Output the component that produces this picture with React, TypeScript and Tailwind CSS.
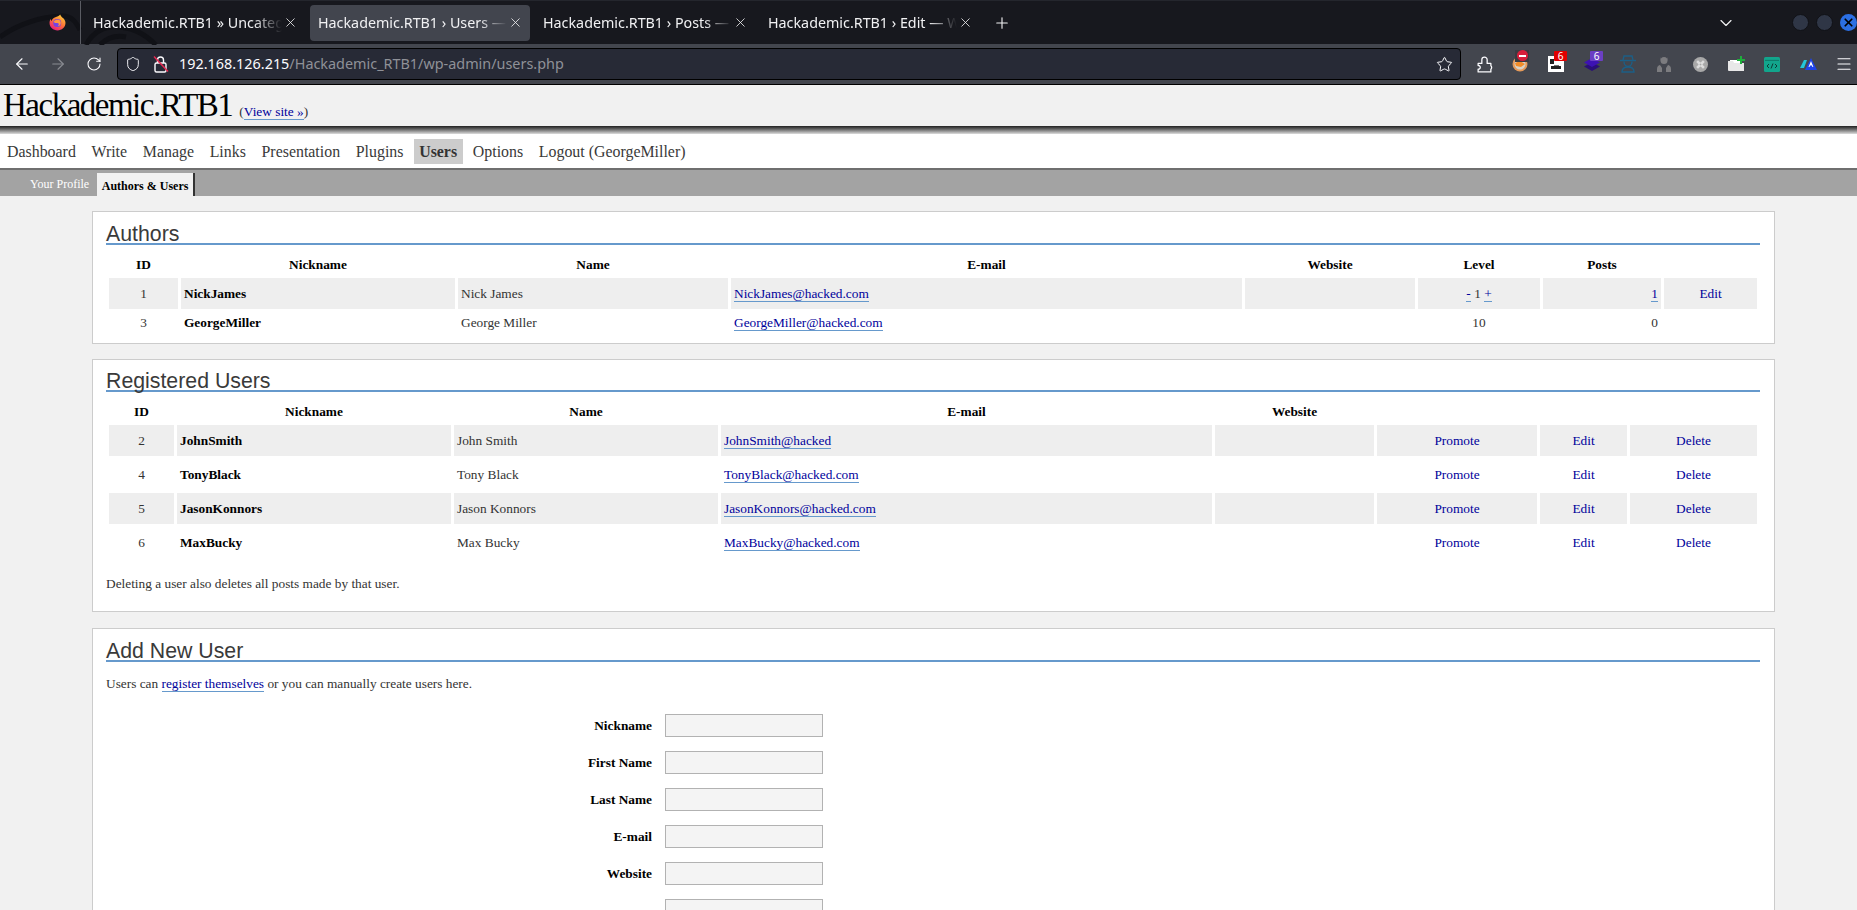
import React from "react";
import { ArrowLeft, ArrowRight, ChevronDown, Menu, Plus, RotateCw, Shield, Star, X } from "lucide-react";

const tabs = [
  { title: "Hackademic.RTB1 » Uncategorized", active: false },
  { title: "Hackademic.RTB1 › Users — WordPress", active: true },
  { title: "Hackademic.RTB1 › Posts — WordPress", active: false },
  { title: "Hackademic.RTB1 › Edit — WordPress", active: false },
];

const navItems = ["Dashboard", "Write", "Manage", "Links", "Presentation", "Plugins", "Users", "Options", "Logout (GeorgeMiller)"];

const registered = [
  { id: 2, nick: "JohnSmith", name: "John Smith", email: "JohnSmith@hacked" },
  { id: 4, nick: "TonyBlack", name: "Tony Black", email: "TonyBlack@hacked.com" },
  { id: 5, nick: "JasonKonnors", name: "Jason Konnors", email: "JasonKonnors@hacked.com" },
  { id: 6, nick: "MaxBucky", name: "Max Bucky", email: "MaxBucky@hacked.com" },
];

const FirefoxLogo = () => (
  <svg width="17" height="17" viewBox="0 0 32 32">
    <defs>
      <linearGradient id="ffa" x1="0.8" y1="0" x2="0.2" y2="1">
        <stop offset="0" stopColor="#ffd23a" />
        <stop offset="0.5" stopColor="#ff7139" />
        <stop offset="1" stopColor="#e31587" />
      </linearGradient>
    </defs>
    <path d="M21 1c1 3 3 5 6 7 3 3 4 6 4 9 0 8-7 14-15 14S1 25 1 17c0-3 1-6 2-8 0 2 1 3 2 4 1-4 4-6 7-7 3-1 7-2 9-5z" fill="url(#ffa)" />
    <circle cx="15.5" cy="17" r="7.5" fill="#7542e5" />
    <path d="M9 14c2-3 6-4 9-3 3 1 5 4 4 8-1 3-4 4-6 4 2-1 3-3 2-5-1-1-3-1-5-1-2 0-3-1-4-3z" fill="#ff9640" />
  </svg>
);

const Wallpaper = () => (
  <svg className="absolute left-0 top-0" width="220" height="44" viewBox="0 0 220 44" fill="none" stroke="#101116" strokeWidth="5">
    <path d="M0 36C20 22 40 16 62 15c10 0 14 6 18 14" />
    <path d="M86 44c6-12 18-20 34-18 16 2 26 8 36 18" />
    <path d="M100 44c8-8 16-10 26-8" />
  </svg>
);

const ExtensionsIcon = () => (
  <svg width="17" height="17" viewBox="0 0 16 16" fill="none" stroke="#fbfbfe" strokeWidth="1.2" strokeLinejoin="round">
    <path d="M2 7h3.5V3.5a2.5 2.5 0 0 1 5 0V7H14v2.2a2.1 2.1 0 0 1 0 3.2V15H2v-2.6h1a1.9 1.9 0 0 0 0-3.4H2z" />
  </svg>
);

const StrikeLock = () => (
  <svg width="16" height="18" viewBox="0 0 16 18" fill="none" stroke="#fbfbfe" strokeWidth="1.4">
    <rect x="2" y="8" width="11" height="9" rx="1.5" />
    <path d="M4.5 8V5a3 3 0 0 1 6 0v3" />
    <path d="M1 1.5L15 16.5" stroke="#e22850" strokeWidth="1.6" />
  </svg>
);

const FoxIcon = () => (
  <svg width="16" height="16" viewBox="0 0 16 16">
    <circle cx="8" cy="8" r="7.5" fill="#e59a5a" />
    <circle cx="8" cy="8" r="5.5" fill="#d9d3c8" />
    <path d="M3 7l5-2 5 3-4 3-5-1z" fill="#f28c28" />
  </svg>
);

const QrIcon = () => (
  <svg width="16" height="16" viewBox="0 0 16 16">
    <rect width="16" height="16" fill="#ffffff" />
    <path d="M2 3h4v5H2zM3 10h10v3H3z" fill="#222222" />
    <path d="M6 9h5v1H6z" fill="#777777" />
  </svg>
);

const StackIcon = () => (
  <svg width="16" height="16" viewBox="0 0 16 16">
    <path d="M8 6l8 4.5L8 15 0 10.5z" fill="#2a0f78" />
    <path d="M8 2l8 4.5L8 11 0 6.5z" fill="#3d12b3" />
  </svg>
);

const SpyIcon = () => (
  <svg width="16" height="18" viewBox="0 0 16 18" fill="none" stroke="#1c5f86" strokeWidth="1.4">
    <path d="M0 5.5h16" />
    <path d="M3 5l1-4h8l1 4" />
    <path d="M4 6.5c0 3 2 5 4 5s4-2 4-5" />
    <path d="M2 17c0-3 2-5 6-5s6 2 6 5z" />
  </svg>
);

const GhostsIcon = () => (
  <svg width="14" height="16" viewBox="0 0 14 16" fill="#7c7c7f">
    <circle cx="7" cy="4.5" r="3.5" />
    <path d="M3 1l1 2h6l1-2-1 4H4z" />
    <path d="M0 16v-3c0-3 2-4 3-4l2 3v4zM14 16v-3c0-3-2-4-3-4l-2 3v4z" />
  </svg>
);

const CommandIcon = () => (
  <svg width="15" height="15" viewBox="0 0 15 15">
    <circle cx="7.5" cy="7.5" r="7.5" fill="#a8a8a8" />
    <path d="M6 6h3v3H6zM6 6H5a1 1 0 1 1 1-1zM9 6V5a1 1 0 1 1 1 1zM9 9h1a1 1 0 1 1-1 1zM6 9v1a1 1 0 1 1-1-1z" fill="none" stroke="#ededed" strokeWidth="1" />
  </svg>
);

const FolderPlus = () => (
  <svg width="17" height="16" viewBox="0 0 17 16">
    <path d="M2 4h11v11H2z" fill="#ffffff" />
    <path d="M0 5h5l1 2h10v8H1a1 1 0 0 1-1-1z" fill="#e8e8e8" />
    <path d="M9 3h3V0h2v3h3v2h-3v3h-2V5H9z" fill="#1fae3d" />
  </svg>
);

const DevIcon = () => (
  <svg width="16" height="15" viewBox="0 0 16 15">
    <rect width="16" height="15" rx="1.5" fill="#12a58c" />
    <path d="M1 3.4h14" stroke="#0b6f60" strokeWidth="0.8" />
    <path d="M5 7L3 9l2 2M11 7l2 2-2 2M9 6.5l-2 5" fill="none" stroke="#0d3b35" strokeWidth="1" />
  </svg>
);

const AiIcon = () => (
  <svg width="17" height="12" viewBox="0 0 17 12">
    <path d="M11 0l6 12H5z" fill="#1f43e8" />
    <path d="M4 2h3L4 10H0z" fill="#23c7d9" />
    <path d="M11 3l2.4 6h-1l-.5-1.4H10l-.5 1.4h-1z" fill="#ffffff" />
  </svg>
);

const Badge = ({ color }: { color: string }) => (
  <span className={`absolute left-[16px] top-[7px] flex h-[10px] w-[13px] items-center justify-center rounded-[1px] text-[10px] leading-none text-white ${color}`}>
    6
  </span>
);

const ExtButton = ({ children }: { children: React.ReactNode }) => (
  <div className="relative flex h-full w-9 shrink-0 items-center justify-center">{children}</div>
);

const BrowserChrome = () => (
  <div className="font-['Noto_Sans',sans-serif]">
    <div className="relative flex h-[44px] items-center border-t border-[#24262d] bg-[#17181e] text-[#f1f1f3]">
      <Wallpaper />
      <div className="relative flex h-full w-[80px] shrink-0 items-center justify-end pr-[14px]">
        <FirefoxLogo />
      </div>
      <div className="relative flex h-full w-[5px] shrink-0 border-l border-[#5a5c63]" />
      {tabs.map((tab) => (
        <div
          key={tab.title}
          className={`relative mr-[5px] flex h-[36px] w-[220px] shrink-0 items-center rounded pl-2 ${tab.active ? "bg-[#42454e]" : ""}`}
        >
          <span className="w-[189px] shrink-0 overflow-hidden whitespace-nowrap text-[14.3px] [mask-image:linear-gradient(to_right,black_85%,transparent)]">
            {tab.title}
          </span>
          <X size={15} strokeWidth={1.3} className="ml-[1px] shrink-0" />
        </div>
      ))}
      <Plus size={18} strokeWidth={1.5} className="ml-[8px] shrink-0" />
      <ChevronDown size={20} strokeWidth={1.4} className="ml-[705px] shrink-0" />
      <div className="ml-[56px] h-[17px] w-[17px] shrink-0 rounded-full border border-[#101116] bg-[#2f3646]" />
      <div className="ml-[7px] h-[17px] w-[17px] shrink-0 rounded-full border border-[#101116] bg-[#2f3646]" />
      <div className="ml-[7px] flex h-[17px] w-[17px] shrink-0 items-center justify-center rounded-full bg-[#2b6fe3] text-black">
        <X size={13} strokeWidth={3.2} />
      </div>
    </div>
    <div className="flex h-[41px] items-center border-b border-black bg-[#43464e] pl-[4px] text-[#fbfbfe]">
      <div className="flex w-9 shrink-0 justify-center">
        <ArrowLeft size={18} strokeWidth={1.5} />
      </div>
      <div className="flex w-9 shrink-0 justify-center text-[#8a8c92]">
        <ArrowRight size={18} strokeWidth={1.5} />
      </div>
      <div className="flex w-9 shrink-0 justify-center">
        <RotateCw size={16} strokeWidth={1.6} />
      </div>
      <div className="ml-[5px] flex h-[32px] w-[1344px] shrink-0 items-center rounded border border-black bg-[#272a36] pl-[7px]">
        <Shield size={16} strokeWidth={1.4} />
        <div className="ml-[12px] flex">
          <StrikeLock />
        </div>
        <span className="ml-[10px] whitespace-nowrap text-[14.4px]">
          192.168.126.215<span className="text-[#8f9198]">/Hackademic_RTB1/wp-admin/users.php</span>
        </span>
        <Star size={17} strokeWidth={1.4} className="ml-auto mr-[7px]" />
      </div>
      <div className="ml-[5px] flex h-full shrink-0">
        <ExtButton>
          <ExtensionsIcon />
        </ExtButton>
        <ExtButton>
          <FoxIcon />
          <span className="absolute left-[13px] top-[6px] h-[12px] w-[14px] bg-[#3a3c42]" />
          <span className="absolute left-[15px] top-[6px] flex h-[11px] w-[11px] items-center justify-center rounded-full bg-[#d81e3a]">
            <span className="h-[2px] w-[7px] bg-white" />
          </span>
        </ExtButton>
        <ExtButton>
          <QrIcon />
          <Badge color="bg-[#e00000]" />
        </ExtButton>
        <ExtButton>
          <StackIcon />
          <Badge color="bg-[#6b3fc4]" />
        </ExtButton>
        <ExtButton>
          <SpyIcon />
        </ExtButton>
        <ExtButton>
          <GhostsIcon />
        </ExtButton>
        <ExtButton>
          <CommandIcon />
        </ExtButton>
        <ExtButton>
          <FolderPlus />
        </ExtButton>
        <ExtButton>
          <DevIcon />
        </ExtButton>
        <ExtButton>
          <AiIcon />
        </ExtButton>
        <ExtButton>
          <Menu size={18} strokeWidth={1.5} />
        </ExtButton>
      </div>
    </div>
  </div>
);

const MailLink = ({ children }: { children: React.ReactNode }) => (
  <a className="border-b border-[#6699cc] text-[#00019b]">{children}</a>
);

const Heading = ({ children }: { children: React.ReactNode }) => (
  <h2 className="border-b-2 border-[#6699cc] font-['Liberation_Sans',sans-serif] text-[21.3px] leading-[17px] text-[#3a3a3a]">
    {children}
  </h2>
);

const Th = ({ children }: { children?: React.ReactNode }) => (
  <th className="h-[20px] p-0 text-center font-bold text-black">{children}</th>
);

const AuthorsCard = () => (
  <section className="h-[133px] border border-[#cccccc] bg-white pl-[13px] pr-[14px] pt-[14px]">
    <Heading>Authors</Heading>
    <table className="mt-[7px] w-[1654px] table-fixed border-separate border-spacing-[3px]">
      <colgroup>
        <col className="w-[69px]" />
        <col className="w-[274px]" />
        <col className="w-[270px]" />
        <col className="w-[511px]" />
        <col className="w-[170px]" />
        <col className="w-[122px]" />
        <col className="w-[118px]" />
        <col className="w-[93px]" />
      </colgroup>
      <thead>
        <tr>
          <Th>ID</Th>
          <Th>Nickname</Th>
          <Th>Name</Th>
          <Th>E-mail</Th>
          <Th>Website</Th>
          <Th>Level</Th>
          <Th>Posts</Th>
          <Th />
        </tr>
      </thead>
      <tbody>
        <tr className="h-[31px] bg-[#eeeeee]">
          <td className="text-center">1</td>
          <td className="px-[3px] font-bold text-black">NickJames</td>
          <td className="px-[3px]">Nick James</td>
          <td className="px-[3px]">
            <MailLink>NickJames@hacked.com</MailLink>
          </td>
          <td />
          <td className="text-center">
            <MailLink>-</MailLink> 1 <MailLink>+</MailLink>
          </td>
          <td className="px-[3px] text-right">
            <MailLink>1</MailLink>
          </td>
          <td className="text-center text-[#00019b]">Edit</td>
        </tr>
        <tr className="h-[22px]">
          <td className="text-center">3</td>
          <td className="px-[3px] font-bold text-black">GeorgeMiller</td>
          <td className="px-[3px]">George Miller</td>
          <td className="px-[3px]">
            <MailLink>GeorgeMiller@hacked.com</MailLink>
          </td>
          <td />
          <td className="text-center">10</td>
          <td className="px-[3px] text-right">0</td>
          <td />
        </tr>
      </tbody>
    </table>
  </section>
);

const RegisteredCard = () => (
  <section className="mt-[15px] h-[253px] border border-[#cccccc] bg-white pl-[13px] pr-[14px] pt-[13px]">
    <Heading>Registered Users</Heading>
    <table className="mt-[7px] w-[1654px] table-fixed border-separate border-spacing-[3px]">
      <colgroup>
        <col className="w-[65px]" />
        <col className="w-[274px]" />
        <col className="w-[264px]" />
        <col className="w-[491px]" />
        <col className="w-[159px]" />
        <col className="w-[160px]" />
        <col className="w-[87px]" />
        <col className="w-[127px]" />
      </colgroup>
      <thead>
        <tr>
          <Th>ID</Th>
          <Th>Nickname</Th>
          <Th>Name</Th>
          <Th>E-mail</Th>
          <Th>Website</Th>
          <Th />
          <Th />
          <Th />
        </tr>
      </thead>
      <tbody>
        {registered.map((user, i) => (
          <tr key={user.id} className={`h-[31px] ${i % 2 === 0 ? "bg-[#eeeeee]" : ""}`}>
            <td className="text-center">{user.id}</td>
            <td className="px-[3px] font-bold text-black">{user.nick}</td>
            <td className="px-[3px]">{user.name}</td>
            <td className="px-[3px]">
              <MailLink>{user.email}</MailLink>
            </td>
            <td />
            <td className="text-center text-[#00019b]">Promote</td>
            <td className="text-center text-[#00019b]">Edit</td>
            <td className="text-center text-[#00019b]">Delete</td>
          </tr>
        ))}
      </tbody>
    </table>
    <p className="mt-[13px]">Deleting a user also deletes all posts made by that user.</p>
  </section>
);

const fields = ["Nickname", "First Name", "Last Name", "E-mail", "Website", ""];

const AddUserCard = () => (
  <section className="mt-[16px] border border-[#cccccc] bg-white pb-10 pl-[13px] pr-[14px] pt-[14px]">
    <Heading>Add New User</Heading>
    <p className="mt-[12px]">
      Users can <MailLink>register themselves</MailLink> or you can manually create users here.
    </p>
    <div className="mt-[20px] flex flex-col gap-[14px]">
      {fields.map((label, i) => (
        <div key={i} className="flex items-center">
          <label className="w-[546px] pt-[2px] text-right font-bold text-black">{label}</label>
          <input className="ml-[13px] h-[23px] w-[158px] border border-[#b2b2b2] bg-[#f4f4f4]" />
        </div>
      ))}
    </div>
  </section>
);

export default function App() {
  return (
    <div className="h-[910px] overflow-hidden bg-[#f1f1f1] font-['Liberation_Serif',serif] text-[13.33px] text-[#333333]">
      <BrowserChrome />
      <div className="flex h-[41px] items-center bg-[#f1f1f1] pl-[3px]">
        <span className="text-[33px] tracking-[-1.5px] text-black">Hackademic.RTB1</span>
        <span className="ml-[7px] mt-[12px]">
          (<a className="border-b border-[#6699cc] text-[#00019b]">View site »</a>)
        </span>
      </div>
      <div className="h-[8px] bg-gradient-to-b from-[#222222] to-[#dddddd]" />
      <nav className="flex h-[34px] items-center bg-white pl-[1.5px] text-[15.9px] text-[#393939]">
        {navItems.map((item) => (
          <a
            key={item}
            className={`mr-[4.7px] mt-[1px] px-[5.5px] py-[2px] leading-[21px] ${item === "Users" ? "bg-[#cccccc] font-bold text-[#333333]" : ""}`}
          >
            {item}
          </a>
        ))}
      </nav>
      <div className="flex h-[28px] items-end border-t-2 border-[#6f6f6f] bg-[#a3a3a3] pl-[30px] text-[12px]">
        <a className="mr-[8px] pb-[3px] text-white">Your Profile</a>
        <a className="flex h-[23px] w-[98px] items-center justify-center border-r-2 border-[#333333] bg-[#f1f1f1] pt-[2px] font-bold text-black">
          Authors &amp; Users
        </a>
      </div>
      <main className="ml-[92px] mt-[15px] w-[1683px]">
        <AuthorsCard />
        <RegisteredCard />
        <AddUserCard />
      </main>
    </div>
  );
}
